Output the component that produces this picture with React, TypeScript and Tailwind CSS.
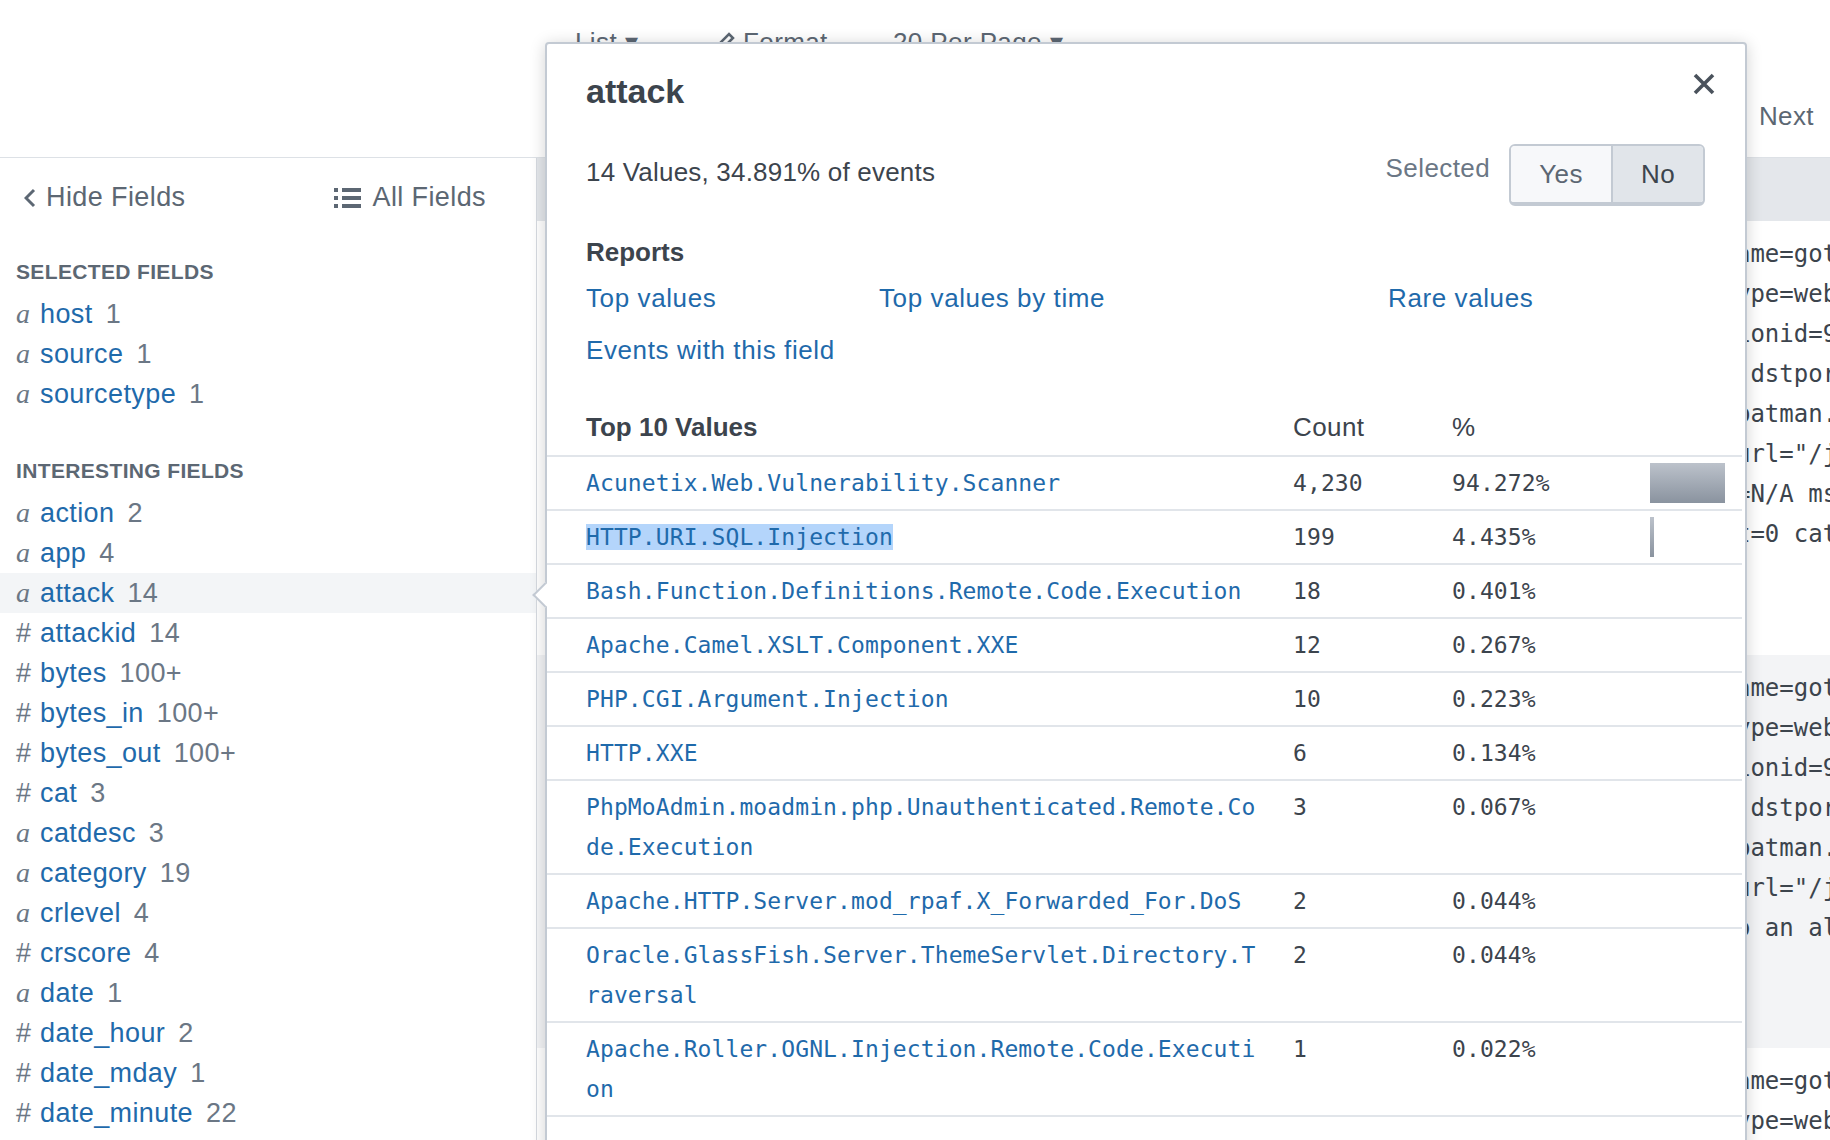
type Field = { type: "a" | "#"; name: string; count: string; active?: boolean };

const selectedFields: Field[] = [
  { type: "a", name: "host", count: "1" },
  { type: "a", name: "source", count: "1" },
  { type: "a", name: "sourcetype", count: "1" },
];

const interestingFields: Field[] = [
  { type: "a", name: "action", count: "2" },
  { type: "a", name: "app", count: "4" },
  { type: "a", name: "attack", count: "14", active: true },
  { type: "#", name: "attackid", count: "14" },
  { type: "#", name: "bytes", count: "100+" },
  { type: "#", name: "bytes_in", count: "100+" },
  { type: "#", name: "bytes_out", count: "100+" },
  { type: "#", name: "cat", count: "3" },
  { type: "a", name: "catdesc", count: "3" },
  { type: "a", name: "category", count: "19" },
  { type: "a", name: "crlevel", count: "4" },
  { type: "#", name: "crscore", count: "4" },
  { type: "a", name: "date", count: "1" },
  { type: "#", name: "date_hour", count: "2" },
  { type: "#", name: "date_mday", count: "1" },
  { type: "#", name: "date_minute", count: "22" },
];

const topValues = [
  { value: "Acunetix.Web.Vulnerability.Scanner", count: "4,230", pct: "94.272%", ratio: 0.94272 },
  { value: "HTTP.URI.SQL.Injection", count: "199", pct: "4.435%", ratio: 0.04435, selected: true },
  { value: "Bash.Function.Definitions.Remote.Code.Execution", count: "18", pct: "0.401%", ratio: 0.00401 },
  { value: "Apache.Camel.XSLT.Component.XXE", count: "12", pct: "0.267%", ratio: 0.00267 },
  { value: "PHP.CGI.Argument.Injection", count: "10", pct: "0.223%", ratio: 0.00223 },
  { value: "HTTP.XXE", count: "6", pct: "0.134%", ratio: 0.00134 },
  { value: "PhpMoAdmin.moadmin.php.Unauthenticated.Remote.Code.Execution", count: "3", pct: "0.067%", ratio: 0.00067 },
  { value: "Apache.HTTP.Server.mod_rpaf.X_Forwarded_For.DoS", count: "2", pct: "0.044%", ratio: 0.00044 },
  { value: "Oracle.GlassFish.Server.ThemeServlet.Directory.Traversal", count: "2", pct: "0.044%", ratio: 0.00044 },
  { value: "Apache.Roller.OGNL.Injection.Remote.Code.Execution", count: "1", pct: "0.022%", ratio: 0.00022 },
];

// event lines: first 80 columns sit under the popover, the rest peeks out on the right
function ev(hidden: string, shown: string) {
  return hidden.slice(-80).padStart(80, " ") + shown;
}

const eventLines = [
  ev('date=2019-05-21 time=14:02:11 logid="0316013056" devn', 'ame=gotham devid="FGT60D4614044725"'),
  ev('vd="root" eventtime=1558472531 type="utm" subt', 'ype=webfilter eventtype="ftgd_blk"'),
  ev('level="warning" srcip=10.0.2.15 srcport=50912 srcintf="port2" sess', 'ionid=94271 proto=6'),
  ev('dstip=172.16.1.100 dstintf="port1" policyid=1', ' dstport=80 service="HTTP"'),
  ev('method="domain" cat=52 reqtype="direct" hostname="', 'batman.gotham.com"'),
  ev('profile="default" ', 'url="/jmx-console/HtmlAdaptor"'),
  ev('sentbyte=912 rcvdbyte=0 direction="outgoing" crscore', '=N/A msg="URL belongs"'),
  ev('catdesc="Hacking" crlevel="low" attack="Acunetix" coun', 't=0 cat=52'),
];

const eventLines2 = [
  ev('date=2019-05-21 time=14:02:09 logid="0316013056" devn', 'ame=gotham devid="FGT60D4614044725"'),
  ev('vd="root" eventtime=1558472529 type="utm" subt', 'ype=webfilter eventtype="ftgd_blk"'),
  ev('level="warning" srcip=10.0.2.15 srcport=50908 srcintf="port2" sess', 'ionid=94268 proto=6'),
  ev('dstip=172.16.1.100 dstintf="port1" policyid=1', ' dstport=80 service="HTTP"'),
  ev('method="domain" cat=52 reqtype="direct" hostname="', 'batman.gotham.com"'),
  ev('profile="default" ', 'url="/jmx-console/HtmlAdaptor"'),
  ev('msg="URL belongs to a category with warnings" act=blocked reason="belongs t', 'o an allowed category"'),
];

const eventLines3 = [
  ev('date=2019-05-21 time=14:02:07 logid="0316013056" devn', 'ame=gotham devid="FGT60D4614044725"'),
  ev('vd="root" eventtime=1558472527 type="utm" subt', 'ype=webfilter eventtype="ftgd_blk"'),
];

function FieldRow({ field }: { field: Field }) {
  return (
    <div
      className={
        field.active
          ? "flex h-[40px] items-center bg-[#f3f5f7] pl-[16px]"
          : "flex h-[40px] items-center pl-[16px]"
      }
    >
      <span className="w-[24px] text-[#6b7785]">
        {field.type === "a" ? (
          <span className="font-['Liberation_Serif',serif] text-[28px] italic">a</span>
        ) : (
          "#"
        )}
      </span>
      <span className="text-[#1f6aab]">{field.name}</span>
      <span className="ml-[13px] text-[#6b7785]">{field.count}</span>
    </div>
  );
}

function EventText({ lines }: { lines: string[] }) {
  return (
    <div className="whitespace-pre pl-[43px] pt-[13px] font-['DejaVu_Sans_Mono',monospace] text-[24px] leading-[40px] tracking-normal text-[#3c444d]">
      {lines.map((l, i) => (
        <div key={i}>{l}</div>
      ))}
    </div>
  );
}

export default function App() {
  return (
    <div className="relative h-[1140px] w-[1830px] overflow-hidden bg-white font-['Liberation_Sans',Arial,sans-serif] text-[26px] tracking-[0.4px] text-[#3c444d]">
      <header className="flex h-[158px] border-b border-[#dde1e6]">
        <div className="w-[537px] shrink-0" />
        <div className="flex flex-1 flex-col text-[#5c6773]">
          <div className="flex h-[84px] items-center pl-[38px]">
            <span className="w-[140px]">List ▾</span>
            <span className="flex w-[178px] items-center gap-[8px]">
              <svg width="20" height="20" viewBox="0 0 20 20" fill="none" stroke="#5c6773" strokeWidth="2.5">
                <path d="M3 17 L4 12 L14 2 L18 6 L8 16 Z" />
              </svg>
              Format
            </span>
            <span>20 Per Page ▾</span>
          </div>
          <div className="flex justify-end pr-[16px] pt-[12px] leading-[40px]">Next</div>
        </div>
      </header>

      <div className="flex h-[982px]">
        <aside className="w-[537px] shrink-0 border-r border-[#d5dae0] text-[27px]">
          <div className="flex h-[79px] items-center justify-between pl-[24px] pr-[50px] text-[#5c6773]">
            <span className="flex items-center gap-[10px]">
              <svg width="12" height="20" viewBox="0 0 12 20" fill="none" stroke="#5c6773" strokeWidth="3">
                <path d="M10 2 L2 10 L10 18" />
              </svg>
              Hide Fields
            </span>
            <span className="flex items-center gap-[11px]">
              <svg width="27" height="20" viewBox="0 0 27 20" fill="#5c6773">
                <rect x="0" y="0" width="4" height="4" />
                <rect x="8" y="0" width="19" height="4" />
                <rect x="0" y="8" width="4" height="4" />
                <rect x="8" y="8" width="19" height="4" />
                <rect x="0" y="16" width="4" height="4" />
                <rect x="8" y="16" width="19" height="4" />
              </svg>
              All Fields
            </span>
          </div>

          <div className="mt-[13px] flex h-[44px] items-center pl-[16px] text-[21px] font-bold uppercase tracking-[0.35px] text-[#5c6773]">
            Selected Fields
          </div>
          {selectedFields.map((f) => (
            <FieldRow key={f.name} field={f} />
          ))}

          <div className="mt-[35px] flex h-[44px] items-center pl-[16px] text-[21px] font-bold uppercase tracking-[0.35px] text-[#5c6773]">
            Interesting Fields
          </div>
          {interestingFields.map((f) => (
            <FieldRow key={f.name} field={f} />
          ))}
        </aside>

        <main className="flex min-w-0 flex-1 flex-col overflow-hidden">
          <div className="h-[63px] shrink-0 bg-[#e4e7eb]" />
          <div className="h-[434px] shrink-0 bg-white">
            <EventText lines={eventLines} />
          </div>
          <div className="h-[393px] shrink-0 bg-[#f3f4f6]">
            <EventText lines={eventLines2} />
          </div>
          <div className="flex-1 bg-white">
            <EventText lines={eventLines3} />
          </div>
        </main>
      </div>

      {/* field summary popover */}
      <div className="absolute left-[545px] top-[42px] h-[1120px] w-[1202px] rounded-[4px] border-2 border-[#c3cad3] bg-white shadow-[0_2px_16px_rgba(0,0,0,0.18)]">
        <div className="absolute left-[-11px] top-[542px] h-[18px] w-[18px] rotate-45 border-b-2 border-l-2 border-[#c3cad3] bg-white" />

        <div className="pl-[39px] pr-[40px] pt-[27px]">
          <div className="flex items-start justify-between">
            <h2 className="text-[34px] font-bold leading-[40px] tracking-normal">attack</h2>
            <svg className="-mr-[10px] mt-[2px]" width="22" height="22" viewBox="0 0 22 22" fill="none" stroke="#4a525c" strokeWidth="3.6">
              <path d="M2 2 L20 20 M20 2 L2 20" />
            </svg>
          </div>

          <div className="mt-[33px] flex h-[62px] items-center justify-between">
            <span className="mb-[6px] tracking-[0.2px]">14 Values, 34.891% of events</span>
            <div className="flex items-center">
              <span className="mb-[14px] mr-[19px] text-[#6b7785]">Selected</span>
              <div className="flex h-[62px] w-[196px] overflow-hidden rounded-[6px] border-2 border-b-4 border-[#c3cad3]">
                <span className="flex w-[100px] items-center justify-center bg-[#f7f8fa] text-[#5c6773]">Yes</span>
                <span className="flex flex-1 items-center justify-center border-l-2 border-[#c3cad3] bg-[#e1e5ea]">No</span>
              </div>
            </div>
          </div>

          <h3 className="mt-[26px] font-bold leading-[40px] tracking-normal">Reports</h3>
          <div className="mt-[6px] grid grid-cols-[293px_509px_1fr] gap-y-[12px] leading-[40px] tracking-[0.6px] text-[#1f6aab]">
            <span>Top values</span>
            <span>Top values by time</span>
            <span>Rare values</span>
            <span>Events with this field</span>
          </div>
        </div>

        <div className="mr-[3px] mt-[31px]">
          <div className="flex border-b-2 border-[#e1e5ea] pb-[8px] pt-[6px] leading-[40px]">
            <div className="w-[746px] shrink-0 pl-[39px] font-bold tracking-normal">Top 10 Values</div>
            <div className="w-[159px] shrink-0">Count</div>
            <div className="w-[198px] shrink-0">%</div>
          </div>
          {topValues.map((v) => (
            <div key={v.value} className="flex border-b-2 border-[#e1e5ea] py-[6px] font-['DejaVu_Sans_Mono',monospace] text-[23px] leading-[40px] tracking-[0.1px]">
              <div className="w-[746px] shrink-0 pl-[39px]">
                <div className="w-[675px] break-all text-[#1f6aab]">
                  {v.selected ? <span className="bg-[#b4d5fb]">{v.value}</span> : v.value}
                </div>
              </div>
              <div className="w-[159px] shrink-0">{v.count}</div>
              <div className="w-[198px] shrink-0">{v.pct}</div>
              <div className="h-[40px] flex-1">
                {v.ratio * 80 >= 1 && (
                  <div className="h-[40px] bg-linear-to-b from-[#bcc2cb] to-[#8a939f]" style={{ width: `${v.ratio * 80}px` }} />
                )}
              </div>
            </div>
          ))}
        </div>
      </div>
    </div>
  );
}
